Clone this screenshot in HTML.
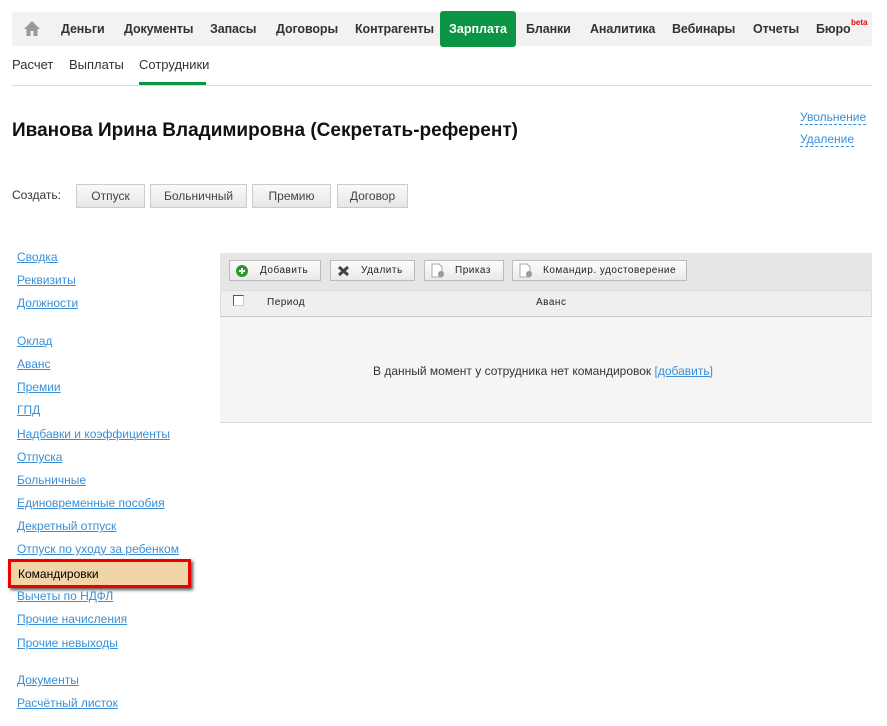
<!DOCTYPE html>
<html><head><meta charset="utf-8"><style>
*{margin:0;padding:0;box-sizing:border-box}
body{width:887px;height:726px;background:#fff;font-family:"Liberation Sans",sans-serif;position:relative;overflow:hidden;color:#222}
.a{position:absolute;white-space:nowrap}
.nav{position:absolute;left:12px;top:12px;width:860px;height:34px;background:#f2f2f2;border-radius:3px}
.ni{position:absolute;top:22px;font-size:12.5px;font-weight:bold;color:#333;letter-spacing:-0.1px}
.sel{position:absolute;left:440px;top:11px;width:76px;height:36px;background:#0b9444;border-radius:3px;color:#fff;font-weight:bold;font-size:12.5px;text-align:center;line-height:37px}
.sub{position:absolute;top:57px;font-size:13px;color:#333}
.btn{position:absolute;top:184px;height:24px;border:1px solid #ccc;background:linear-gradient(#fafafa,#e6e6e6);font-size:12px;color:#444;text-align:center;line-height:22px}
.lk{position:absolute;left:17px;font-size:12px;color:#3a8fd6;text-decoration:underline;white-space:nowrap}
.rl{position:absolute;left:800px;font-size:12px;color:#3a8fd6;border-bottom:1px dashed #3a8fd6;line-height:14px}
.tb{position:absolute;top:260px;height:21px;border:1px solid #bbb;background:linear-gradient(#fdfdfd,#e9e9e9);font-size:10px;letter-spacing:.5px;color:#222;line-height:19px}
</style></head><body>
<div class="nav"></div>
<svg class="a" style="left:23px;top:20px" width="18" height="17" viewBox="0 0 18 17"><path d="M9 1 L1 9 H3.5 V16 H7.5 V11 H10.5 V16 H14.5 V9 H17 Z" fill="#999"/></svg>
<div class="ni" style="left:61px">Деньги</div>
<div class="ni" style="left:124px">Документы</div>
<div class="ni" style="left:210px">Запасы</div>
<div class="ni" style="left:276px">Договоры</div>
<div class="ni" style="left:355px">Контрагенты</div>
<div class="sel">Зарплата</div>
<div class="ni" style="left:526px">Бланки</div>
<div class="ni" style="left:590px">Аналитика</div>
<div class="ni" style="left:672px">Вебинары</div>
<div class="ni" style="left:753px">Отчеты</div>
<div class="ni" style="left:816px">Бюро</div>
<div class="a" style="left:851px;top:18px;font-size:8px;font-weight:bold;color:#e00">beta</div>
<div class="sub" style="left:12px">Расчет</div>
<div class="sub" style="left:69px">Выплаты</div>
<div class="sub" style="left:139px">Сотрудники</div>
<div class="a" style="left:139px;top:82px;width:67px;height:3px;background:#0b9444"></div>
<div class="a" style="left:12px;top:85px;width:860px;height:1px;background:#ddd"></div>
<div class="a" style="left:12px;top:120px;font-size:19px;font-weight:bold;color:#111">Иванова Ирина Владимировна (Секретать-референт)</div>
<div class="rl" style="top:110px">Увольнение</div>
<div class="rl" style="top:132px">Удаление</div>
<div class="a" style="left:12px;top:188px;font-size:12px;color:#333">Создать:</div>
<div class="btn" style="left:76px;width:69px">Отпуск</div>
<div class="btn" style="left:150px;width:97px">Больничный</div>
<div class="btn" style="left:252px;width:79px">Премию</div>
<div class="btn" style="left:337px;width:71px">Договор</div>
<div class="lk" style="top:250px">Сводка</div>
<div class="lk" style="top:273px">Реквизиты</div>
<div class="lk" style="top:296px">Должности</div>
<div class="lk" style="top:334px">Оклад</div>
<div class="lk" style="top:357px">Аванс</div>
<div class="lk" style="top:380px">Премии</div>
<div class="lk" style="top:403px">ГПД</div>
<div class="lk" style="top:427px">Надбавки и коэффициенты</div>
<div class="lk" style="top:450px">Отпуска</div>
<div class="lk" style="top:473px">Больничные</div>
<div class="lk" style="top:496px">Единовременные пособия</div>
<div class="lk" style="top:519px">Декретный отпуск</div>
<div class="lk" style="top:542px">Отпуск по уходу за ребенком</div>
<div class="a" style="left:8px;top:559px;width:183px;height:29px;border:3px solid #e00;background:#f1d5a7;box-shadow:2px 2px 3px #555;font-size:12px;color:#000;padding:5px 0 0 7px">Командировки</div>
<div class="lk" style="top:589px">Вычеты по НДФЛ</div>
<div class="lk" style="top:612px">Прочие начисления</div>
<div class="lk" style="top:636px">Прочие невыходы</div>
<div class="lk" style="top:673px">Документы</div>
<div class="lk" style="top:696px">Расчётный листок</div>
<div class="a" style="left:220px;top:253px;width:652px;height:37px;background:#e6e6e6"></div>
<div class="tb" style="left:229px;width:92px"><svg class="a" style="left:6px;top:4px" width="12" height="12"><circle cx="6" cy="6" r="6" fill="#2a9a2a"/><path d="M6 3v6M3 6h6" stroke="#fff" stroke-width="2"/></svg><span class="a" style="left:30px">Добавить</span></div>
<div class="tb" style="left:330px;width:85px"><svg class="a" style="left:6px;top:4px" width="13" height="12"><path d="M2 2l9 8M11 2l-9 8" stroke="#444" stroke-width="3"/></svg><span class="a" style="left:30px">Удалить</span></div>
<div class="tb" style="left:424px;width:80px"><svg class="a" style="left:6px;top:2px" width="14" height="15"><path d="M1 1h7l3 3v10H1z" fill="#fff" stroke="#aaa"/><circle cx="10" cy="11" r="3" fill="#999"/></svg><span class="a" style="left:30px">Приказ</span></div>
<div class="tb" style="left:512px;width:175px"><svg class="a" style="left:6px;top:2px" width="14" height="15"><path d="M1 1h7l3 3v10H1z" fill="#fff" stroke="#aaa"/><circle cx="10" cy="11" r="3" fill="#999"/></svg><span class="a" style="left:30px">Командир. удостоверение</span></div>
<div class="a" style="left:220px;top:290px;width:652px;height:27px;background:#efefef;border-top:1px solid #ddd;border-bottom:1px solid #ccc;border-left:1px solid #ddd;border-right:1px solid #ddd"></div>
<div class="a" style="left:233px;top:295px;width:11px;height:11px;border:1px solid #555;background:#fff;border-right-color:#ccc;border-bottom-color:#ccc"></div>
<div class="a" style="left:267px;top:297px;font-size:10px;letter-spacing:.5px">Период</div>
<div class="a" style="left:536px;top:297px;font-size:10px;letter-spacing:.5px">Аванс</div>
<div class="a" style="left:220px;top:317px;width:652px;height:106px;background:#f5f5f5;border-bottom:1px solid #ddd"></div>
<div class="a" style="left:373px;top:364px;font-size:12px;color:#333">В данный момент у сотрудника нет командировок <span style="color:#3a8fd6;text-decoration:underline">[добавить]</span></div>
</body></html>
